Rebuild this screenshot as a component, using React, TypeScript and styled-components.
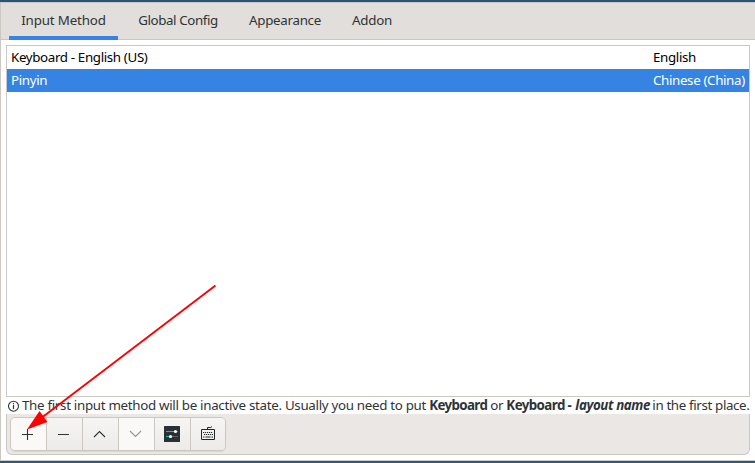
import React from "react";
import styled, { createGlobalStyle } from "styled-components";

const GlobalStyle = createGlobalStyle`
  * { box-sizing: border-box; }
  body { margin: 0; overflow: hidden; font-family: "Noto Sans", sans-serif; font-size: 13.33px; color: #2e3436; }
  button { font: inherit; color: inherit; }
  svg { flex: none; }
`;

const Window = styled.main`
  position: relative;
  display: flex;
  flex-direction: column;
  width: 755px;
  height: 463px;
  background: #fff;
  border-top: 2px solid #2b5378;
  border-bottom: 2px solid #2a597c;
`;

const Frame = styled.div`
  flex: 1;
  display: flex;
  flex-direction: column;
  min-height: 0;
  border: 1px solid #cdc7c2;
  border-right: 0;
`;

const TabBar = styled.nav`
  display: flex;
  flex: 0 0 37px;
  height: 37px;
  min-height: 0;
  padding-left: 8px;
  background: #e1dedb;
  border-bottom: 1px solid #c8c8c8;
`;

const Tab = styled.button<{ $active?: boolean; $width: number; $spacing: number }>`
  width: ${(p) => p.$width}px;
  height: 37px;
  margin: 0 8px -1px 0;
  padding: 0 0 1px;
  line-height: 34px;
  letter-spacing: ${(p) => p.$spacing}px;
  white-space: nowrap;
  background: none;
  border: 0;
  border-bottom: 4px solid ${(p) => (p.$active ? "#3584e4" : "transparent")};
`;

const Content = styled.section`
  flex: 1;
  display: flex;
  flex-direction: column;
  padding: 5px;
`;

const MethodList = styled.div`
  height: 352px;
  border: 1px solid #c8c8c8;
  border-bottom-color: #cdc7c2;
`;

const MethodRow = styled.div<{ $selected?: boolean }>`
  display: grid;
  grid-template-columns: 642px 1fr;
  height: 23px;
  padding-left: 4px;
  line-height: 23px;
  letter-spacing: -0.35px;
  white-space: nowrap;
  color: ${(p) => (p.$selected ? "#fff" : "#000")};
  background: ${(p) => (p.$selected ? "#3584e4" : "#fff")};
`;

const Hint = styled.div`
  display: flex;
  align-items: center;
  height: 17px;
  padding-left: 1px;
  line-height: 17px;
  white-space: pre;
`;

const HintPart = styled.span<{ $width: number; $spacing: number; $bold?: boolean; $italic?: boolean }>`
  flex: 0 0 ${(p) => p.$width}px;
  letter-spacing: ${(p) => p.$spacing}px;
  font-weight: ${(p) => (p.$bold ? 700 : 400)};
  font-style: ${(p) => (p.$italic ? "italic" : "normal")};
`;

const Toolbar = styled.div`
  height: 41px;
  padding: 3px 0 0 3px;
  background: #ebe7e4;
  border: 1px solid #cdc7c2;
  border-top: 0;
  border-radius: 0 0 6px 6px;
`;

const ButtonGroup = styled.div`
  display: flex;
  width: 216px;
  height: 34px;
  border: 1px solid #cdc7c2;
  border-radius: 5px;
  overflow: hidden;
  box-shadow: 0 1px 1px rgba(0, 0, 0, 0.08);
`;

const ToolButton = styled.button<{ $flat?: boolean }>`
  flex: 0 0 36px;
  display: flex;
  align-items: center;
  justify-content: center;
  padding: 0 1px 0 0;
  border: 0;
  background: ${(p) => (p.$flat ? "#faf9f8" : "linear-gradient(#f6f5f3, #edebe9)")};
  & + & { border-left: 1px solid #cdc7c2; }
  &:first-child, &:last-child { flex-basis: 35px; }
  &:last-child { padding-right: 0; }
`;

const Arrow = styled.svg`
  position: absolute;
  left: 0;
  top: -2px;
  pointer-events: none;
`;

const tabs = [
  { label: "Input Method", width: 109, spacing: -0.16 },
  { label: "Global Config", width: 104, spacing: -0.4 },
  { label: "Appearance", width: 94, spacing: -0.3 },
  { label: "Addon", width: 64, spacing: -0.2 },
];

function InfoIcon() {
  return (
    <svg width="15" height="14" viewBox="0 0 15 14" fill="none" stroke="#2e3436">
      <circle cx="6.5" cy="7.2" r="5" strokeWidth="1.1" />
      <path d="M6.5 6v4M6.5 4v1.2" strokeWidth="1.2" />
    </svg>
  );
}

function LineIcon({ d, color = "#2e3436" }: { d: string; color?: string }) {
  return (
    <svg width="16" height="16" viewBox="0 0 16 16" fill="none" stroke={color}>
      <path d={d} strokeWidth="1.1" />
    </svg>
  );
}

function SlidersIcon() {
  return (
    <svg width="16" height="16" viewBox="0 0 16 16">
      <rect width="16" height="16" rx=".6" fill="#2b3036" />
      <path d="M2 5.5h9M2 10.5h4" stroke="#1abc9c" />
      <path d="M12 5.5h2M7 10.5h7" stroke="#596066" />
      <circle cx="11.5" cy="5.5" r="1.6" fill="#fff" />
      <circle cx="6.5" cy="10.5" r="1.6" fill="#fff" />
    </svg>
  );
}

function KeyboardIcon() {
  return (
    <svg width="16" height="16" viewBox="0 0 16 16" fill="none" stroke="#232629">
      <path d="M1.5 3.5h13v10h-13z" />
      <path d="M7.5 3.5v-2h3.2l1.3-1" />
      <path d="M3 6.5h10M4 8.5h9" strokeDasharray="1.2 .8" strokeWidth="1.1" />
      <path d="M3 11h1.5M5.5 11h5M11.5 11h1.5" strokeWidth="1.1" />
    </svg>
  );
}

export default function App() {
  return (
    <Window>
      <GlobalStyle />
      <Frame>
        <TabBar>
          {tabs.map((t, i) => (
            <Tab key={t.label} $width={t.width} $spacing={t.spacing} $active={i === 0}>{t.label}</Tab>
          ))}
        </TabBar>
        <Content>
          <MethodList>
            <MethodRow><span>Keyboard - English (US)</span><span>English</span></MethodRow>
            <MethodRow $selected><span>Pinyin</span><span>Chinese (China)</span></MethodRow>
          </MethodList>
          <Hint>
            <InfoIcon />
            <HintPart $width={407} $spacing={-0.3}>The first input method will be inactive state. Usually you need to put </HintPart>
            <HintPart $width={61} $spacing={-0.63} $bold>Keyboard</HintPart>
            <HintPart $width={16} $spacing={-0.3}>or </HintPart>
            <HintPart $width={69} $spacing={-0.58} $bold>Keyboard - </HintPart>
            <HintPart $width={77} $spacing={-0.4} $bold $italic>layout name</HintPart>
            <HintPart $width={97} $spacing={-0.36}>in the first place.</HintPart>
          </Hint>
          <Toolbar>
            <ButtonGroup>
              <ToolButton $flat aria-label="Add"><LineIcon d="M2 8.5h11M7.5 3v11" /></ToolButton>
              <ToolButton aria-label="Remove"><LineIcon d="M2 8.5h11" /></ToolButton>
              <ToolButton aria-label="Move up"><LineIcon d="M2 11l5.5-5.5L13 11" /></ToolButton>
              <ToolButton $flat aria-label="Move down"><LineIcon d="M2 5l5.5 5.5L13 5" color="#929595" /></ToolButton>
              <ToolButton aria-label="Configure"><SlidersIcon /></ToolButton>
              <ToolButton aria-label="Keyboard layout"><KeyboardIcon /></ToolButton>
            </ButtonGroup>
          </Toolbar>
        </Content>
      </Frame>
      <Arrow width="755" height="463" viewBox="0 0 755 463">
        <path d="M215.5 285.5L40 419" stroke="#f00" strokeWidth="1.9" />
        <path d="M27 429.5L39.5 411L47.5 422Z" fill="#f00" />
      </Arrow>
    </Window>
  );
}
